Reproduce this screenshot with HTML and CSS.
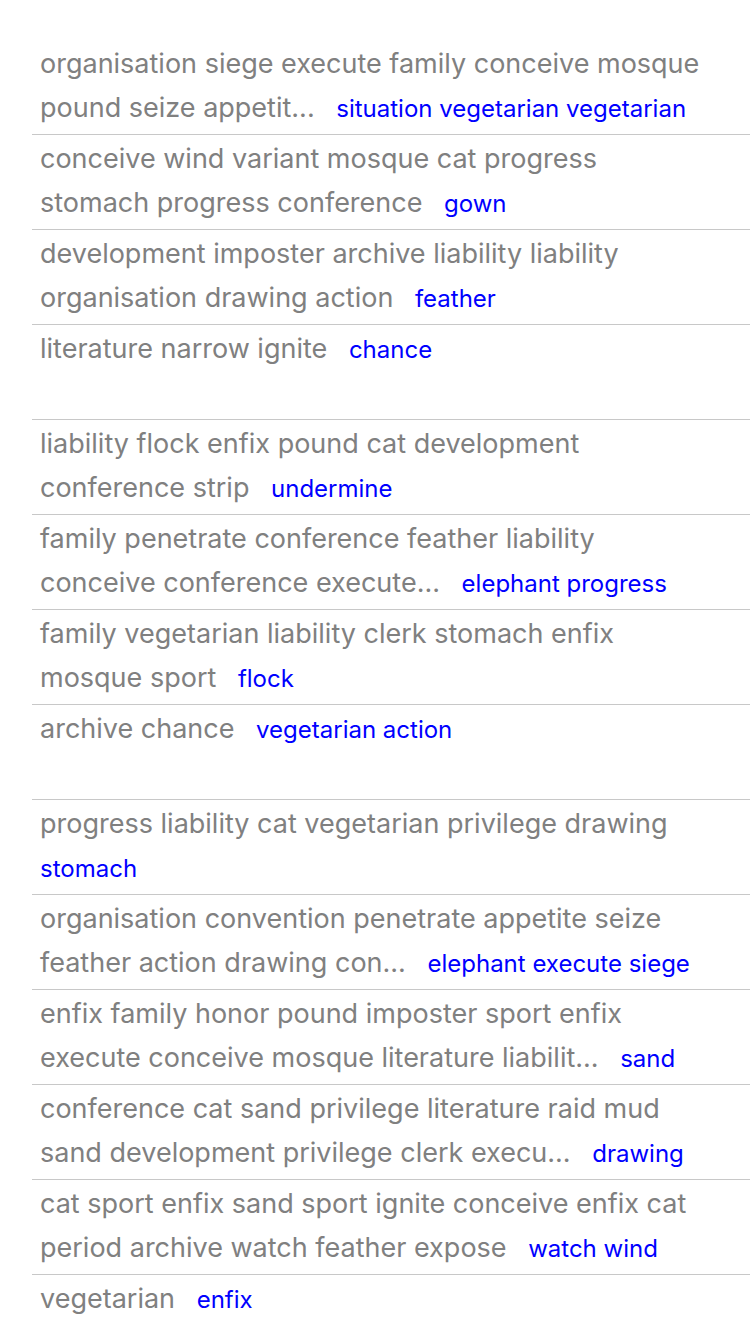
FILE: index.html
```html
<!DOCTYPE html>
<html>
<head>
<meta charset="utf-8">
<link rel="stylesheet" href="styles.css">
</head>
<body>
<ul class="list">
  <li class="item"><span class="title">organisation siege execute family conceive mosque pound seize appetit...</span> <span class="tag">situation vegetarian vegetarian</span></li>
  <li class="item"><span class="title">conceive wind variant mosque cat progress stomach progress conference</span> <span class="tag">gown</span></li>
  <li class="item"><span class="title">development imposter archive liability liability organisation drawing action</span> <span class="tag">feather</span></li>
  <li class="item"><span class="title">literature narrow ignite</span> <span class="tag">chance</span></li>
  <li class="item"><span class="title">liability flock enfix pound cat development conference strip</span> <span class="tag">undermine</span></li>
  <li class="item"><span class="title">family penetrate conference feather liability conceive conference execute...</span> <span class="tag">elephant progress</span></li>
  <li class="item"><span class="title">family vegetarian liability clerk stomach enfix mosque sport</span> <span class="tag">flock</span></li>
  <li class="item"><span class="title">archive chance</span> <span class="tag">vegetarian action</span></li>
  <li class="item"><span class="title">progress liability cat vegetarian privilege drawing</span> <span class="tag">stomach</span></li>
  <li class="item"><span class="title">organisation convention penetrate appetite seize feather action drawing con...</span> <span class="tag">elephant execute siege</span></li>
  <li class="item"><span class="title">enfix family honor pound imposter sport enfix execute conceive mosque literature liabilit...</span> <span class="tag">sand</span></li>
  <li class="item"><span class="title">conference cat sand privilege literature raid mud sand development privilege clerk execu...</span> <span class="tag">drawing</span></li>
  <li class="item"><span class="title">cat sport enfix sand sport ignite conceive enfix cat period archive watch feather expose</span> <span class="tag">watch wind</span></li>
  <li class="item"><span class="title">vegetarian</span> <span class="tag">enfix</span></li>
</ul>
</body>
</html>
```

FILE: styles.css
```css
html, body {
  margin: 0;
  padding: 0;
  background: #ffffff;
}

body {
  font-family: Inter, "Noto Sans", "Liberation Sans", sans-serif;
}

.list {
  list-style: none;
  margin: 0 0 0 32px;
  padding: 40px 0 0 0;
}

.item {
  box-sizing: border-box;
  height: 95px;
  padding: 2px 40px 0 8px;
  border-bottom: 1px solid #c8c8c8;
  font-size: 27px;
  line-height: 44px;
  color: #808080;
  word-spacing: 14px;
  overflow: hidden;
}

.title {
  word-spacing: normal;
}

.tag {
  font-size: 24px;
  line-height: 1;
  word-spacing: normal;
  color: #0000ff;
}
```
